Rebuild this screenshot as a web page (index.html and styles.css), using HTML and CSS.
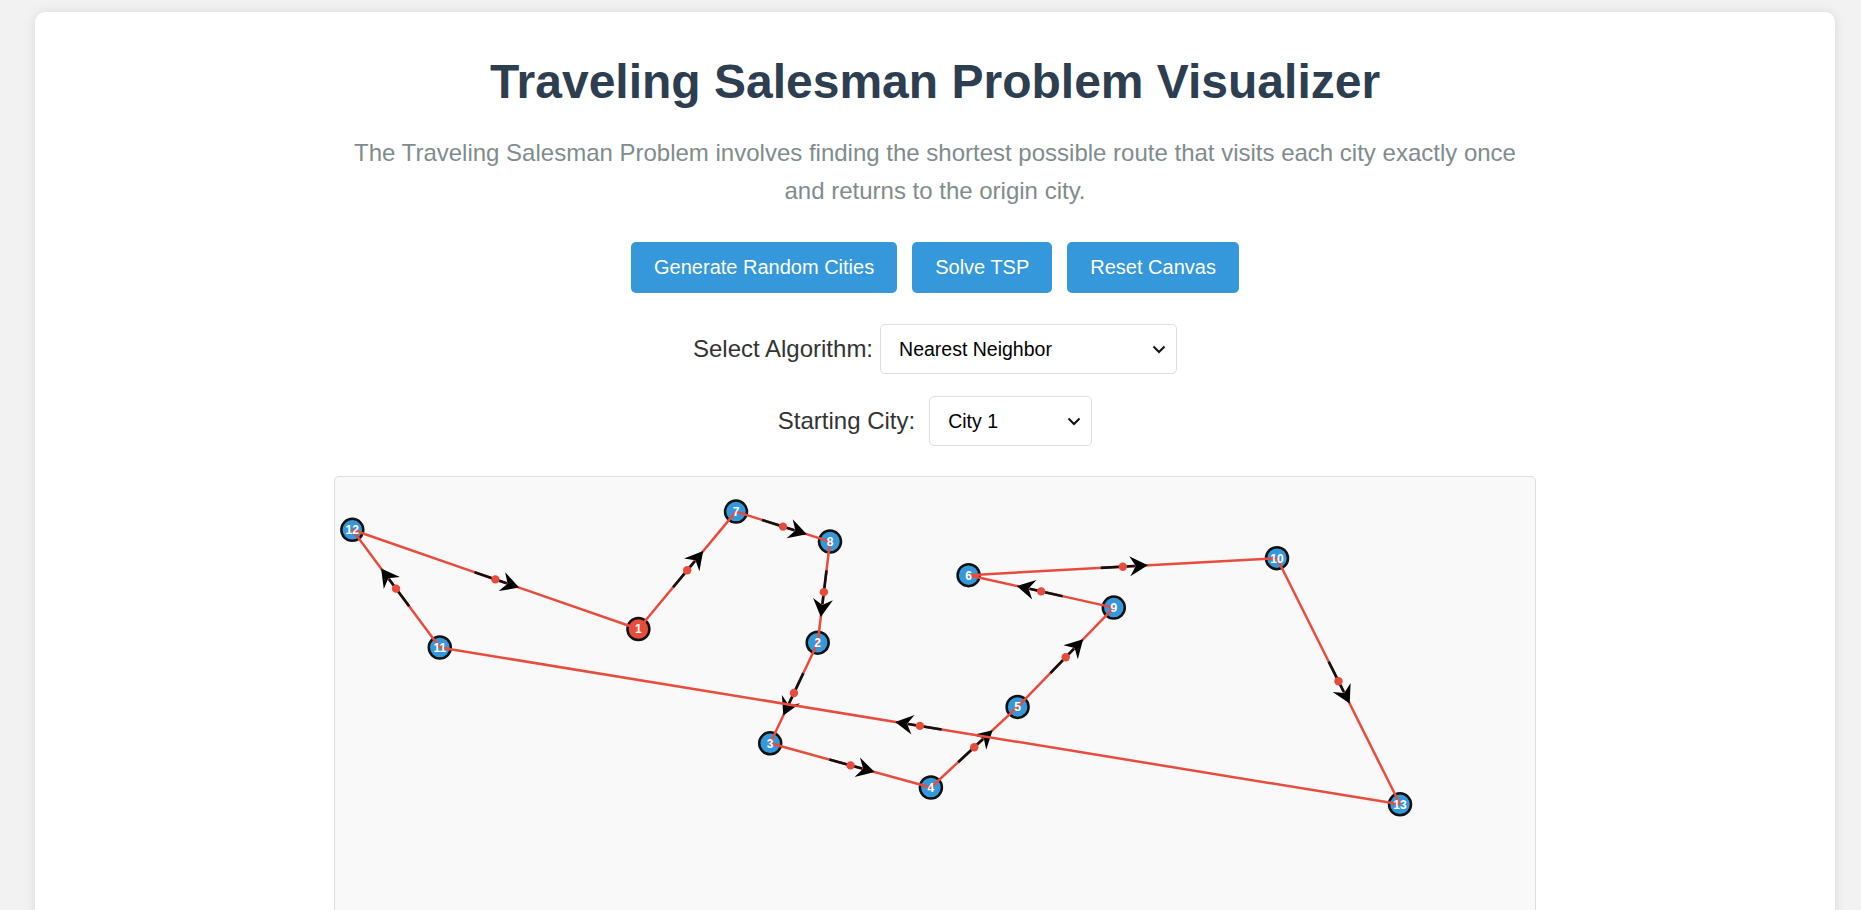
FILE: index.html
```html
<!DOCTYPE html>
<html lang="en">
<head>
<meta charset="utf-8">
<title>Traveling Salesman Problem Visualizer</title>
<link rel="stylesheet" href="styles.css">
<script src="script.js" defer></script>
</head>
<body>
<div class="card">
  <h1 class="title">Traveling Salesman Problem Visualizer</h1>
  <p class="intro">The Traveling Salesman Problem involves finding the shortest possible route that visits each city exactly once and returns to the origin city.</p>
  <div class="buttons">
    <button class="btn">Generate Random Cities</button>
    <button class="btn">Solve TSP</button>
    <button class="btn">Reset Canvas</button>
  </div>
  <div class="control-row">
    <label class="control-label" for="algo">Select Algorithm:</label>
    <div class="select-box">
      <select id="algo" class="select select-algo">
        <option>Nearest Neighbor</option>
        <option>Brute Force</option>
        <option>2-Opt</option>
      </select>
      <svg class="chevron" width="14" height="9" viewBox="0 0 14 9"><path d="M1.5 1.5 L7 7 L12.5 1.5" fill="none" stroke="#111" stroke-width="2"/></svg>
    </div>
  </div>
  <div class="control-row control-row-last">
    <label class="control-label" for="start">Starting City:</label>
    <div class="select-box">
      <select id="start" class="select select-start">
        <option>City 1</option>
        <option>City 2</option>
        <option>City 3</option>
      </select>
      <svg class="chevron" width="14" height="9" viewBox="0 0 14 9"><path d="M1.5 1.5 L7 7 L12.5 1.5" fill="none" stroke="#111" stroke-width="2"/></svg>
    </div>
  </div>
  <div class="canvas-wrap">
    <svg id="tsp" class="canvas" width="1200" height="600" viewBox="0 0 1200 600" xmlns="http://www.w3.org/2000/svg"></svg>
  </div>
</div>
</body>
</html>
```
FILE: styles.css
```css
html {
  overflow: hidden;
}
body {
  margin: 0;
  padding: 12px 26px 0 35px;
  background: #f2f2f2;
  font-family: "Liberation Sans", Arial, sans-serif;
}
.card {
  background: #fff;
  border-radius: 10px;
  box-shadow: 0 0 12px rgba(0, 0, 0, 0.1);
  padding: 43px 20px 40px;
  text-align: center;
}
.title {
  margin: 0;
  font-size: 48px;
  font-weight: bold;
  color: #2c3e50;
  line-height: 54px;
}
.intro {
  max-width: 1200px;
  margin: 25px auto 32px;
  font-size: 24px;
  line-height: 38px;
  color: #7f8c8d;
}
.buttons {
  display: flex;
  justify-content: center;
  gap: 15px;
  margin-bottom: 31px;
}
.btn {
  font-family: "Liberation Sans", Arial, sans-serif;
  font-size: 20px;
  line-height: 23px;
  padding: 14px 23px;
  border: none;
  border-radius: 5px;
  background: #3498db;
  color: #fff;
  cursor: pointer;
}
.control-row {
  display: flex;
  justify-content: center;
  align-items: center;
  gap: 7px;
  margin-bottom: 22px;
}
.control-row-last {
  gap: 14px;
  margin-bottom: 30px;
}
.control-label {
  font-size: 24px;
  color: #333;
}
.select-box {
  position: relative;
  display: flex;
}
.select {
  -webkit-appearance: none;
  appearance: none;
  height: 50px;
  font-family: "Liberation Sans", Arial, sans-serif;
  font-size: 19.5px;
  color: #000;
  background: #fff;
  border: 1px solid #ddd;
  border-radius: 5px;
  padding: 0 30px 0 18px;
}
.chevron {
  position: absolute;
  right: 11px;
  top: 21px;
  pointer-events: none;
}
.select-algo {
  width: 297px;
}
.select-start {
  width: 163px;
}
.canvas-wrap {
  width: 1200px;
  height: 600px;
  margin: 0 auto;
  border: 1px solid #ddd;
  border-radius: 5px;
  background: #f9f9f9;
}
.canvas {
  display: block;
}
```
FILE: script.js
```js
(function () {
  var NS = "http://www.w3.org/2000/svg";
  var svg = document.getElementById("tsp");
  var cities = {
    1: [303.4, 152],
    2: [482.7, 165.7],
    3: [435.2, 266.3],
    4: [595.9, 310.5],
    5: [682.6, 229.9],
    6: [633.6, 98.2],
    7: [401, 34.6],
    8: [495, 64.6],
    9: [778.8, 130.6],
    10: [942, 81.2],
    11: [104.8, 170.5],
    12: [17.3, 52.8],
    13: [1065, 327.3]
  };
  var tour = [1, 7, 8, 2, 3, 4, 5, 9, 6, 10, 13, 11, 12, 1];

  function el(name, attrs, parent) {
    var e = document.createElementNS(NS, name);
    for (var k in attrs) e.setAttribute(k, attrs[k]);
    (parent || svg).appendChild(e);
    return e;
  }

  var nodeLayer = el("g", {});
  var edgeLayer = el("g", {});
  var labelLayer = el("g", {});

  Object.keys(cities).forEach(function (id) {
    var c = cities[id];
    el("circle", {
      cx: c[0], cy: c[1], r: 11,
      fill: id === "1" ? "#e74c3c" : "#3498db",
      stroke: "#111", "stroke-width": 2.5
    }, nodeLayer);
  });

  for (var i = 0; i < tour.length - 1; i++) {
    var a = cities[tour[i]], b = cities[tour[i + 1]];
    var dx = b[0] - a[0], dy = b[1] - a[1];
    var len = Math.sqrt(dx * dx + dy * dy);
    var ux = dx / len, uy = dy / len, nx = -uy, ny = ux;
    var mx = (a[0] + b[0]) / 2, my = (a[1] + b[1]) / 2;
    el("line", { x1: a[0], y1: a[1], x2: b[0], y2: b[1], stroke: "#e74c3c", "stroke-width": 2.5 }, edgeLayer);
    el("line", {
      x1: mx - 22 * ux, y1: my - 22 * uy, x2: mx + 12 * ux, y2: my + 12 * uy,
      stroke: "#111", "stroke-width": 2.6
    }, edgeLayer);
    el("circle", { cx: mx, cy: my, r: 4.2, fill: "#e74c3c" }, edgeLayer);
    var tip = [mx + 25 * ux, my + 25 * uy];
    var w1 = [mx + 7 * ux + 10 * nx, my + 7 * uy + 10 * ny];
    var notch = [mx + 13 * ux, my + 13 * uy];
    var w2 = [mx + 7 * ux - 10 * nx, my + 7 * uy - 10 * ny];
    el("polygon", {
      points: [tip, w1, notch, w2].map(function (p) { return p[0].toFixed(1) + "," + p[1].toFixed(1); }).join(" "),
      fill: "#000"
    }, edgeLayer);
  }

  Object.keys(cities).forEach(function (id) {
    var c = cities[id];
    var t = el("text", {
      x: c[0], y: c[1] + 4.3,
      "text-anchor": "middle",
      "font-family": "Liberation Sans, Arial, sans-serif",
      "font-size": 12, "font-weight": "bold", fill: "#fff"
    }, labelLayer);
    t.textContent = id;
  });
})();
```
